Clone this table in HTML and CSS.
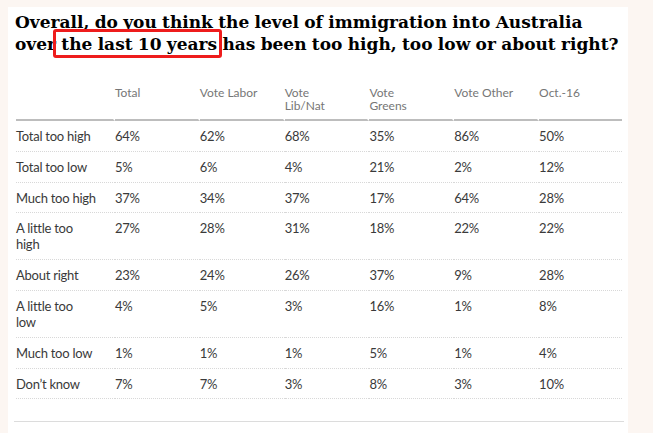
FILE: index.html
```html
<!DOCTYPE html>
<html>
<head>
<meta charset="utf-8">
<link rel="stylesheet" href="styles.css">
</head>
<body>
<div class="panel">
  <h1 class="title">Overall, do you think the level of immigration into Australia<br>over the last 10 years has been too high, too low or about right?</h1>
  <div class="highlight"></div>
  <table class="poll">
    <thead>
      <tr>
        <th class="label-col"></th>
        <th>Total</th>
        <th>Vote Labor</th>
        <th>Vote<br>Lib/Nat</th>
        <th>Vote<br>Greens</th>
        <th>Vote Other</th>
        <th class="last">Oct.-16</th>
      </tr>
    </thead>
    <tbody>
      <tr><td>Total too high</td><td>64%</td><td>62%</td><td>68%</td><td>35%</td><td>86%</td><td>50%</td></tr>
      <tr><td>Total too low</td><td>5%</td><td>6%</td><td>4%</td><td>21%</td><td>2%</td><td>12%</td></tr>
      <tr><td>Much too high</td><td>37%</td><td>34%</td><td>37%</td><td>17%</td><td>64%</td><td>28%</td></tr>
      <tr><td>A little too<br>high</td><td>27%</td><td>28%</td><td>31%</td><td>18%</td><td>22%</td><td>22%</td></tr>
      <tr><td>About right</td><td>23%</td><td>24%</td><td>26%</td><td>37%</td><td>9%</td><td>28%</td></tr>
      <tr><td>A little too<br>low</td><td>4%</td><td>5%</td><td>3%</td><td>16%</td><td>1%</td><td>8%</td></tr>
      <tr><td>Much too low</td><td>1%</td><td>1%</td><td>1%</td><td>5%</td><td>1%</td><td>4%</td></tr>
      <tr><td>Don’t know</td><td>7%</td><td>7%</td><td>3%</td><td>8%</td><td>3%</td><td>10%</td></tr>
    </tbody>
  </table>
  <div class="rule"></div>
</div>
</body>
</html>
```

FILE: styles.css
```css
html, body {
  margin: 0;
  padding: 0;
  background: #fcf6f2;
}
body {
  padding: 7px 0 0 8px;
}
.panel {
  position: relative;
  width: 620px;
  height: 426px;
  background: #ffffff;
  box-sizing: border-box;
  padding: 4px 0 0 7px;
}
.title {
  margin: 0;
  font-family: "DejaVu Serif", serif;
  font-weight: bold;
  font-size: 17px;
  line-height: 22px;
  color: #000;
  letter-spacing: 0;
  word-spacing: -0.6px;
  white-space: nowrap;
}
.highlight {
  position: absolute;
  left: 45px;
  top: 22px;
  width: 163px;
  height: 23px;
  border: 3px solid #ee1c1c;
  border-radius: 3px;
}
.poll {
  margin: 30px 0 0 1px;
  width: 606px;
  border-collapse: separate;
  border-spacing: 0;
  font-family: "Lato", sans-serif;
  table-layout: fixed;
}
.poll th {
  text-align: left;
  vertical-align: top;
  font-weight: normal;
  font-size: 12px;
  color: #767676;
  line-height: 12.5px;
  padding: 2px 0 7px 0;
  border-bottom: 2px solid #bdbdbd;
  border-right: 2px solid #fff;
  width: 82px;
}
.poll th.label-col {
  width: 96px;
}
.poll th.last {
  border-right: 0;
}
.poll td {
  font-size: 13px;
  letter-spacing: -0.25px;
  color: #3a3a3a;
  line-height: 16px;
  padding: 7px 0 6.8px 0;
  border-bottom: 1px dotted #d8d8d8;
  vertical-align: top;
}
.rule {
  margin: 22px 0 0 -1px;
  width: 610px;
  height: 1px;
  background: #dcdcdc;
}
```
